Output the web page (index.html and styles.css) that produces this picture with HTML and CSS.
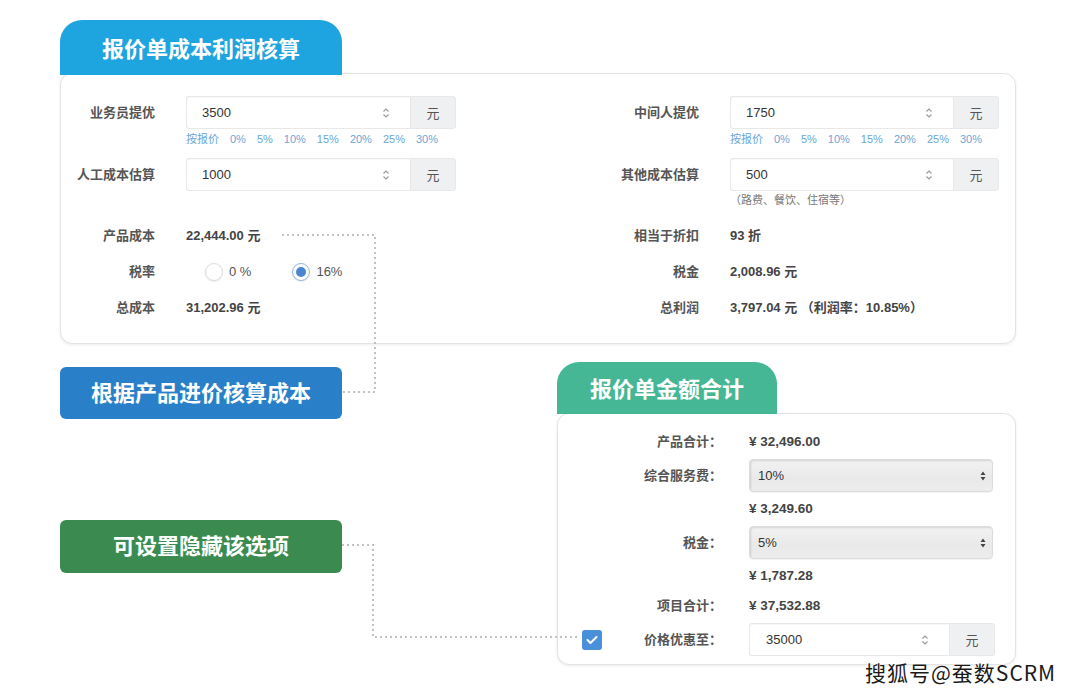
FILE: index.html
```html
<!DOCTYPE html>
<html lang="zh-CN">
<head>
    <title>报价单成本利润核算</title>
    <meta charset="utf-8">
    <meta name="viewport" content="width=device-width, initial-scale=1">
    <link rel="stylesheet" href="styles.css">
</head>
<body>
<div class="page">
    <section class="panel panel-cost">
        <div class="tab tab-blue">报价单成本利润核算</div>
        <div class="card card-cost">
            <div class="row row-input">
                <div class="label">业务员提优</div>
                <div class="field">
                    <div class="input-group">
                        <div class="input">3500
                            <svg class="spin" width="8" height="12" viewBox="0 0 8 12"><path d="M1.5 4.5 L4 2 L6.5 4.5 M1.5 7.5 L4 10 L6.5 7.5" fill="none" stroke="#999" stroke-width="1.1"/></svg>
                        </div>
                        <div class="addon">元</div>
                    </div>
                    <div class="hint"><span>按报价</span><span>0%</span><span>5%</span><span>10%</span><span>15%</span><span>20%</span><span>25%</span><span>30%</span></div>
                </div>
                <div class="label">中间人提优</div>
                <div class="field">
                    <div class="input-group">
                        <div class="input">1750
                            <svg class="spin" width="8" height="12" viewBox="0 0 8 12"><path d="M1.5 4.5 L4 2 L6.5 4.5 M1.5 7.5 L4 10 L6.5 7.5" fill="none" stroke="#999" stroke-width="1.1"/></svg>
                        </div>
                        <div class="addon">元</div>
                    </div>
                    <div class="hint"><span>按报价</span><span>0%</span><span>5%</span><span>10%</span><span>15%</span><span>20%</span><span>25%</span><span>30%</span></div>
                </div>
            </div>

            <div class="row row-input row-second">
                <div class="label">人工成本估算</div>
                <div class="field">
                    <div class="input-group">
                        <div class="input">1000
                            <svg class="spin" width="8" height="12" viewBox="0 0 8 12"><path d="M1.5 4.5 L4 2 L6.5 4.5 M1.5 7.5 L4 10 L6.5 7.5" fill="none" stroke="#999" stroke-width="1.1"/></svg>
                        </div>
                        <div class="addon">元</div>
                    </div>
                </div>
                <div class="label">其他成本估算</div>
                <div class="field">
                    <div class="input-group">
                        <div class="input">500
                            <svg class="spin" width="8" height="12" viewBox="0 0 8 12"><path d="M1.5 4.5 L4 2 L6.5 4.5 M1.5 7.5 L4 10 L6.5 7.5" fill="none" stroke="#999" stroke-width="1.1"/></svg>
                        </div>
                        <div class="addon">元</div>
                    </div>
                    <div class="note-text">（路费、餐饮、住宿等）</div>
                </div>
            </div>

            <div class="row row-text row-third">
                <div class="label">产品成本</div>
                <div class="value">22,444.00 元</div>
                <div class="label">相当于折扣</div>
                <div class="value">93 折</div>
            </div>

            <div class="row row-text">
                <div class="label">税率</div>
                <div class="value radios">
                    <span class="radio-option"><span class="radio"></span>0 %</span>
                    <span class="radio-option"><span class="radio checked"></span>16%</span>
                </div>
                <div class="label">税金</div>
                <div class="value">2,008.96 元</div>
            </div>

            <div class="row row-text">
                <div class="label">总成本</div>
                <div class="value">31,202.96 元</div>
                <div class="label">总利润</div>
                <div class="value">3,797.04 元 （利润率：10.85%）</div>
            </div>
        </div>
    </section>

    <section class="lower">
        <div class="notes">
            <div class="note note-blue">根据产品进价核算成本</div>
            <div class="note note-green">可设置隐藏该选项</div>
        </div>

        <div class="panel panel-total">
            <div class="tab tab-green">报价单金额合计</div>
            <div class="card card-total">
                <div class="t-label">产品合计：</div>
                <div class="t-value">¥ 32,496.00</div>

                <div class="t-label">综合服务费：</div>
                <div class="select">10%
                    <svg class="arrows" width="6" height="10" viewBox="0 0 6 10"><path d="M3 0.5 L5.5 4 L0.5 4 Z M3 9.5 L5.5 6 L0.5 6 Z" fill="#444"/></svg>
                </div>

                <div class="t-label"></div>
                <div class="t-value">¥ 3,249.60</div>

                <div class="t-label">税金：</div>
                <div class="select">5%
                    <svg class="arrows" width="6" height="10" viewBox="0 0 6 10"><path d="M3 0.5 L5.5 4 L0.5 4 Z M3 9.5 L5.5 6 L0.5 6 Z" fill="#444"/></svg>
                </div>

                <div class="t-label"></div>
                <div class="t-value">¥ 1,787.28</div>

                <div class="t-label">项目合计：</div>
                <div class="t-value">¥ 37,532.88</div>

                <div class="t-label t-check">
                    <span class="checkbox">
                        <svg width="12" height="10" viewBox="0 0 12 10"><path d="M1.5 5 L4.5 8 L10.5 2" fill="none" stroke="#fff" stroke-width="2" stroke-linecap="round" stroke-linejoin="round"/></svg>
                    </span>
                    <span>价格优惠至：</span>
                </div>
                <div class="input-group input-total">
                    <div class="input">35000
                        <svg class="spin" width="8" height="12" viewBox="0 0 8 12"><path d="M1.5 4.5 L4 2 L6.5 4.5 M1.5 7.5 L4 10 L6.5 7.5" fill="none" stroke="#999" stroke-width="1.1"/></svg>
                    </div>
                    <div class="addon">元</div>
                </div>
            </div>
        </div>
    </section>

    <!-- dotted connectors from notes to the fields -->
    <svg class="connectors" width="1080" height="699" viewBox="0 0 1080 699">
        <polyline points="282,235 375,235 375,392 342,392" fill="none" stroke="#c2c2c2" stroke-width="2" stroke-dasharray="2 3"/>
        <polyline points="342,545 373,545 373,637 577,637" fill="none" stroke="#c2c2c2" stroke-width="2" stroke-dasharray="2 3"/>
    </svg>

    <div class="watermark">搜狐号@蚕数SCRM</div>
</div>
</body>
</html>
```

FILE: styles.css
```css
:root {
    --text-color: #333;
    --label-color: #555;
    --border-color: #e3e3e3;
    --addon-bg: #eef0f2;
    --hint-color: #6aa6d8;
    --blue-tab: #1ea5df;
    --blue-note: #2a80c8;
    --green-note: #3b8b50;
    --green-tab: #45b794;
    --font: "Liberation Sans", "Noto Sans CJK SC", sans-serif;
}

* {
    margin: 0;
    padding: 0;
    box-sizing: border-box;
}

body {
    font-family: var(--font);
    font-size: 13px;
    color: var(--text-color);
    background-color: #fff;
}

.page {
    position: relative;
    width: 1080px;
    height: 699px;
    padding: 20px 0 0 60px;
    overflow: hidden;
}

/* tabs and cards */

.panel-cost {
    width: 956px;
}

.tab {
    position: relative;
    z-index: 1;
    display: flex;
    align-items: center;
    justify-content: center;
    color: #fff;
    font-family: "Noto Sans CJK SC", sans-serif;
    font-size: 22px;
    line-height: 1;
    font-weight: bold;
    border-radius: 22px 22px 0 0;
}

.tab-blue {
    width: 282px;
    height: 55px;
    padding-bottom: 2px;
    background-color: var(--blue-tab);
}

.tab-green {
    width: 220px;
    height: 52px;
    background-color: var(--green-tab);
    padding-bottom: 2px;
}

.card {
    background: #fff;
    border: 1px solid var(--border-color);
    border-radius: 12px;
    box-shadow: 0 1px 3px rgba(0, 0, 0, 0.08);
}

.card-cost {
    margin-top: -2px;
    padding: 22px 16px 17px 0;
}

/* rows of the cost card */

.row {
    display: grid;
    grid-template-columns: 94px 270px 212px 269px;
    column-gap: 31px;
    align-items: start;
}

.row-second {
    margin-top: 12px;
}

.row-third {
    margin-top: 11px;
}

.label {
    text-align: right;
    color: var(--label-color);
    font-weight: bold;
    white-space: nowrap;
}

.row-input .label {
    line-height: 33px;
}

.row-text .label,
.row-text .value {
    line-height: 36px;
    height: 36px;
}

.value {
    font-weight: bold;
    color: #444;
    white-space: nowrap;
}

.input-group {
    display: flex;
    height: 33px;
}

.input {
    flex: 1;
    display: flex;
    align-items: center;
    justify-content: space-between;
    padding: 0 20px 0 15px;
    background: #fff;
    border: 1px solid #e8e8e8;
    border-right: none;
    border-radius: 3px 0 0 3px;
    box-shadow: inset 0 1px 1px rgba(0, 0, 0, 0.03);
    font-size: 13px;
    color: #333;
}

.addon {
    width: 46px;
    display: flex;
    align-items: center;
    justify-content: center;
    background: var(--addon-bg);
    border: 1px solid #e6e8ea;
    border-radius: 0 3px 3px 0;
    color: #555;
}

.hint {
    display: flex;
    gap: 11px;
    margin-top: 3px;
    font-size: 11px;
    line-height: 14px;
    color: var(--hint-color);
}

.note-text {
    margin-top: 2px;
    font-size: 11px;
    line-height: 14px;
    color: #777;
}

.radios {
    display: flex;
    align-items: center;
    padding-left: 19px;
    gap: 41px;
    font-weight: normal;
    color: #555;
}

.radio-option {
    display: inline-flex;
    align-items: center;
    gap: 6px;
}

.radio {
    width: 18px;
    height: 18px;
    border-radius: 50%;
    border: 1px solid #ddd;
    background: #fff;
    box-shadow: 0 1px 2px rgba(0, 0, 0, 0.08);
    display: inline-flex;
    align-items: center;
    justify-content: center;
}

.radio.checked {
    border-color: #8db6e2;
}

.radio.checked::after {
    content: "";
    width: 10px;
    height: 10px;
    border-radius: 50%;
    background: #4a86d0;
}

/* lower part */

.lower {
    display: flex;
    margin-top: 18px;
}

.notes {
    width: 282px;
    padding-top: 5px;
}

.note {
    display: flex;
    align-items: center;
    justify-content: center;
    padding-bottom: 5px;
    color: #fff;
    font-family: "Noto Sans CJK SC", sans-serif;
    font-size: 22px;
    line-height: 1;
    font-weight: bold;
    border-radius: 6px;
}

.note-blue {
    height: 52px;
    background-color: var(--blue-note);
}

.note-green {
    height: 53px;
    margin-top: 101px;
    background-color: var(--green-note);
}

.panel-total {
    width: 459px;
    margin-left: 215px;
}

.card-total {
    margin-top: -1px;
    display: grid;
    grid-template-columns: 164px 246px;
    column-gap: 27px;
    row-gap: 4px;
    padding: 15px 20px 8px 0;
}

.t-label {
    text-align: right;
    line-height: 26px;
    color: var(--label-color);
    font-weight: bold;
    white-space: nowrap;
    align-self: center;
}

.t-value {
    line-height: 26px;
    font-size: 13.5px;
    font-weight: bold;
    color: #444;
}

.select {
    width: 244px;
    height: 33px;
    display: flex;
    align-items: center;
    justify-content: space-between;
    padding: 0 6px 0 8px;
    background: linear-gradient(to bottom, #f2f2f2, #e9e9e9 60%, #ededed);
    border: 1px solid #dcdcdc;
    border-radius: 4px;
    box-shadow: inset 1px 1px 2px rgba(0, 0, 0, 0.12), 0 1px 1px rgba(0, 0, 0, 0.05);
    color: #333;
}

.t-check {
    display: flex;
    align-items: center;
    justify-content: space-between;
    padding-left: 24px;
    line-height: 33px;
}

.checkbox {
    width: 20px;
    height: 20px;
    border-radius: 3px;
    background: #4a8fda;
    display: inline-flex;
    align-items: center;
    justify-content: center;
}

.input-total .input {
    padding-left: 16px;
}

/* overlays */

.connectors {
    position: absolute;
    top: 0;
    left: 0;
    pointer-events: none;
}

.watermark {
    position: absolute;
    left: 865px;
    top: 658px;
    font-family: "Noto Sans CJK SC", sans-serif;
    font-size: 21px;
    letter-spacing: 1px;
    line-height: 28px;
    color: #1a1a1a;
    text-shadow: 0 0 2px #fff, 0 0 2px #fff;
}
```
